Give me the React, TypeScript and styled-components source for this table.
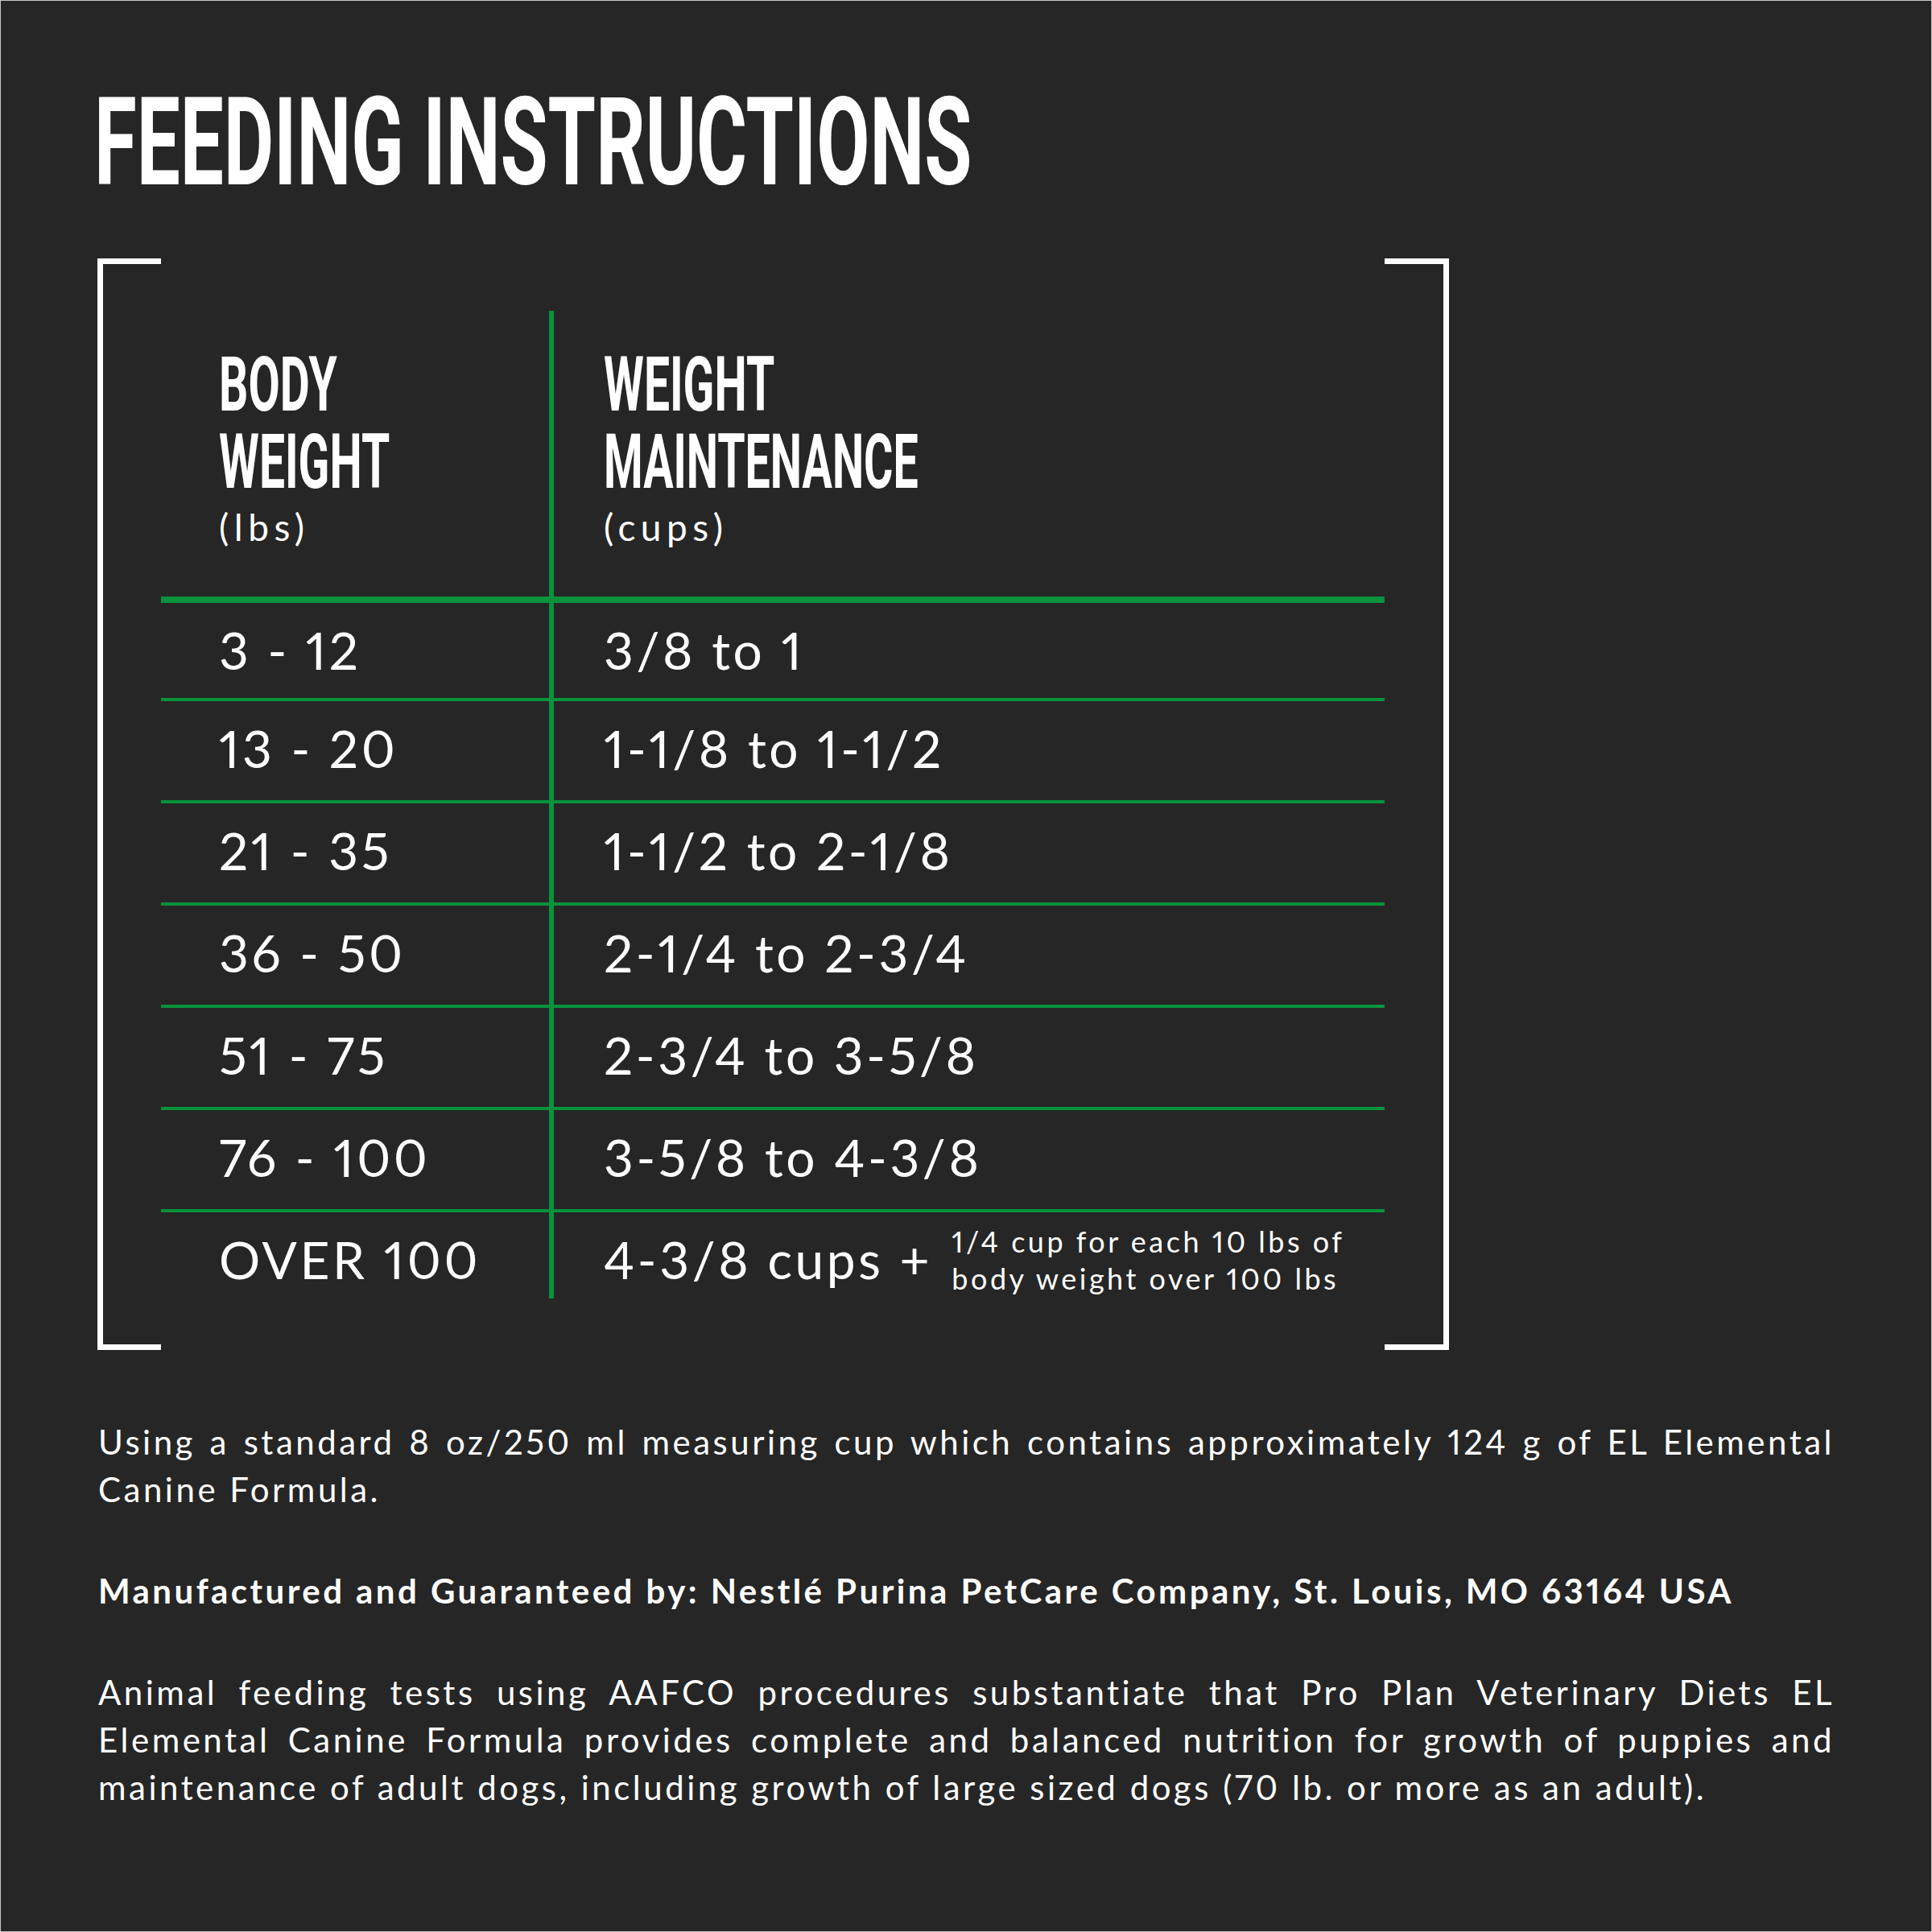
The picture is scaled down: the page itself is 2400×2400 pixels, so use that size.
import React from "react";
import styled, { createGlobalStyle } from "styled-components";

const GREEN = "#06933c";

const GlobalStyle = createGlobalStyle`
  html, body { margin: 0; padding: 0; background: #262626; }
  body { font-family: Lato, "Open Sans", sans-serif; }
`;

const Page = styled.div`
  width: 2400px;
  height: 2400px;
  box-sizing: border-box;
  border: 1px solid #c9c9c9;
  background: #262626;
  padding: 99px 121px 0 121px;
  display: flex;
  flex-direction: column;
  color: #fff;
`;

const Title = styled.h1`
  margin: 0 0 0 -5px;
  font-family: Roboto, "Liberation Sans", sans-serif;
  font-weight: 700;
  font-size: 153px;
  line-height: 153px;
  white-space: nowrap;
  transform: scaleX(0.628);
  transform-origin: left top;
`;

const Frame = styled.div`
  margin: 68px 0 0 -1px;
  display: flex;
  height: 1356px;
  width: 1679px;
`;

const Bracket = styled.div<{ $side: "left" | "right" }>`
  box-sizing: border-box;
  width: ${(p) => (p.$side === "left" ? 79 : 80)}px;
  border: 7px solid #fff;
  ${(p) => (p.$side === "left" ? "border-right: none;" : "border-left: none;")}
`;

const Table = styled.div`
  width: 1520px;
  padding-top: 65px;
  display: flex;
  flex-direction: column;
`;

const Row = styled.div<{ $h: number; $rule: number }>`
  display: flex;
  height: ${(p) => p.$h}px;
  border-bottom: ${(p) => p.$rule}px solid ${GREEN};
`;

const Cell = styled.div<{ $first?: boolean; $pad: number; $center?: boolean }>`
  box-sizing: border-box;
  ${(p) => (p.$first ? "width: 482px;" : "flex: 1;")}
  padding-left: ${(p) => (p.$first ? 72 : 62)}px;
  padding-top: ${(p) => p.$pad}px;
  display: flex;
  ${(p) => (p.$center ? "align-items: center; align-self: flex-start;" : "flex-direction: column;")}
`;

const Divider = styled.div`
  width: 6px;
  background: ${GREEN};
  flex: none;
`;

const HeadWord = styled.span<{ $scale: number }>`
  display: block;
  font-family: Roboto, "Liberation Sans", sans-serif;
  font-weight: 700;
  font-size: 95px;
  line-height: 96px;
  white-space: nowrap;
  transform: scaleX(${(p) => p.$scale});
  transform-origin: left top;
`;

const Unit = styled.span`
  display: block;
  margin-top: 3px;
  font-size: 46px;
  line-height: 60px;
  letter-spacing: 6.5px;
  font-weight: 400;
`;

const Value = styled.span`
  font-size: 64px;
  line-height: 64px;
  font-weight: 400;
  white-space: nowrap;
  letter-spacing: 3.6px;
  font-variant-numeric: proportional-nums;
`;

const Note = styled.span`
  margin-left: 24px;
  font-size: 36px;
  line-height: 46px;
  font-weight: 400;
  white-space: nowrap;
  letter-spacing: 3.5px;
  font-variant-numeric: proportional-nums;
`;

const Footer = styled.div`
  margin-top: 85px;
  width: 2157px;
  display: flex;
  flex-direction: column;
  gap: 67px;
`;

const Para = styled.div<{ $bold?: boolean }>`
  font-size: 42px;
  line-height: 59px;
  font-weight: ${(p) => (p.$bold ? 700 : 400)};
  letter-spacing: ${(p) => (p.$bold ? 3.45 : 3.5)}px;
  font-variant-numeric: proportional-nums;
`;

const Line = styled.span<{ $last?: boolean }>`
  display: block;
  white-space: nowrap;
  text-align: justify;
  text-align-last: ${(p) => (p.$last ? "left" : "justify")};
`;

const rows: [string, string][] = [
  ["3 - 12", "3/8 to 1"],
  ["13 - 20", "1-1/8 to 1-1/2"],
  ["21 - 35", "1-1/2 to 2-1/8"],
  ["36 - 50", "2-1/4 to 2-3/4"],
  ["51 - 75", "2-3/4 to 3-5/8"],
  ["76 - 100", "3-5/8 to 4-3/8"],
];

export default function App() {
  return (
    <>
      <GlobalStyle />
      <Page>
        <Title>FEEDING INSTRUCTIONS</Title>
        <Frame>
          <Bracket $side="left" />
          <Table>
            <Row $h={355} $rule={8}>
              <Cell $first $pad={44}>
                <HeadWord $scale={0.6}>BODY</HeadWord>
                <HeadWord $scale={0.6}>WEIGHT</HeadWord>
                <Unit>(lbs)</Unit>
              </Cell>
              <Divider />
              <Cell $pad={44}>
                <HeadWord $scale={0.6}>WEIGHT</HeadWord>
                <HeadWord $scale={0.585}>MAINTENANCE</HeadWord>
                <Unit>(cups)</Unit>
              </Cell>
            </Row>
            {rows.map(([a, b], i) => (
              <Row key={a} $h={i === 0 ? 118 : 123} $rule={4}>
                <Cell $first $pad={27}>
                  <Value>{a}</Value>
                </Cell>
                <Divider />
                <Cell $pad={27}>
                  <Value>{b}</Value>
                </Cell>
              </Row>
            ))}
            <Row $h={107} $rule={0}>
              <Cell $first $pad={27}>
                <Value>OVER 100</Value>
              </Cell>
              <Divider />
              <Cell $pad={13} $center>
                <Value>4-3/8 cups +</Value>
                <Note>
                  1/4 cup for each 10 lbs of
                  <br />
                  body weight over 100 lbs
                </Note>
              </Cell>
            </Row>
          </Table>
          <Bracket $side="right" />
        </Frame>
        <Footer>
          <Para>
            <Line>
              Using a standard 8 oz/250 ml measuring cup which contains approximately 124 g of EL Elemental
            </Line>
            <Line $last>Canine Formula.</Line>
          </Para>
          <Para $bold>
            Manufactured and Guaranteed by: Nestlé Purina PetCare Company, St. Louis, MO 63164 USA
          </Para>
          <Para>
            <Line>
              Animal feeding tests using AAFCO procedures substantiate that Pro Plan Veterinary Diets EL
            </Line>
            <Line>
              Elemental Canine Formula provides complete and balanced nutrition for growth of puppies and
            </Line>
            <Line $last>
              maintenance of adult dogs, including growth of large sized dogs (70 lb. or more as an adult).
            </Line>
          </Para>
        </Footer>
      </Page>
    </>
  );
}
